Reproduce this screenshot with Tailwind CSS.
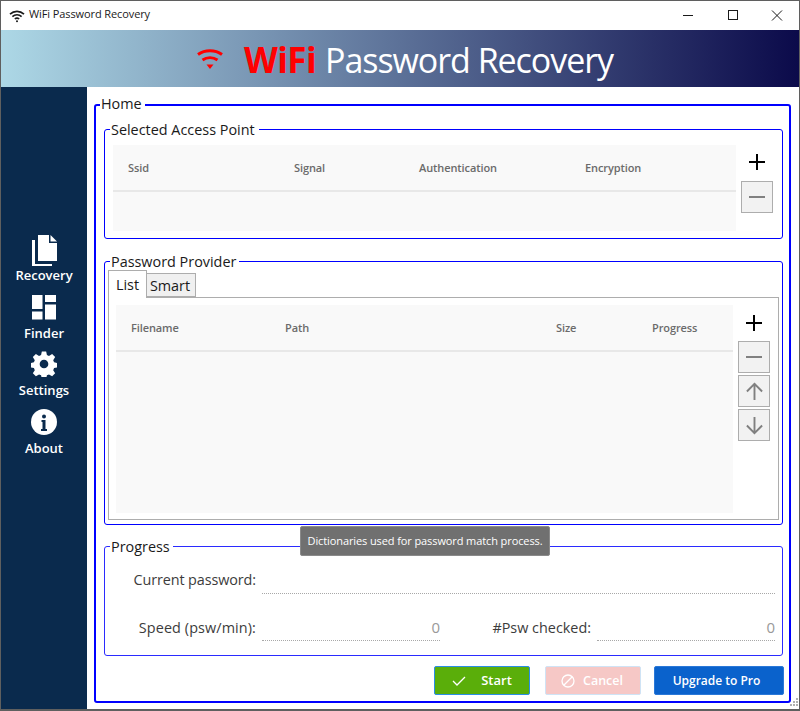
<!DOCTYPE html>
<html lang="en">
<head>
  <meta charset="UTF-8">
  <title>WiFi Password Recovery</title>
  <script src="https://cdn.jsdelivr.net/npm/@tailwindcss/browser@4"></script>
</head>
<body class="bg-white">
  <div class="relative flex h-[711px] w-[800px] flex-col overflow-hidden border border-b-2 border-[#5f5f5f] font-['Open_Sans',sans-serif] text-[#1a1a1a]">

    <!-- title bar -->
    <header class="flex h-[29px] shrink-0 items-center justify-between pl-[8px]">
      <div class="flex items-center gap-[4px]">
        <svg width="16" height="14" viewBox="0 0 16 14" fill="none" stroke="#1a1a1a" stroke-width="1.6"><path d="M1 5.200C5 1.400 11 1.400 15 5.200"/><path d="M3.400 7.600C6 5.200 10 5.200 12.600 7.600"/><path d="M5.800 10C7 9 9 9 10.200 10"/><circle cx="8" cy="12.200" r="1" fill="#1a1a1a" stroke="none"/></svg>
        <span class="mt-[-2px] text-[11px] tracking-[-0.1px]">WiFi Password Recovery</span>
      </div>
      <div class="flex items-center">
        <svg width="46" height="29" viewBox="0 0 46 29" stroke="#1a1a1a" fill="none"><path d="M18 14.500h10"/></svg>
        <svg width="44" height="29" viewBox="0 0 44 29" stroke="#1a1a1a" fill="none"><rect x="17.500" y="9.500" width="9" height="9"/></svg>
        <svg width="44" height="29" viewBox="0 0 44 29" stroke="#1a1a1a" fill="none"><path d="M17 9.500l10 10M27 9.500l-10 10"/></svg>
      </div>
    </header>

    <!-- banner -->
    <div class="flex h-[57px] shrink-0 items-center bg-linear-to-r/srgb from-[#add8e6] to-[#0b0a4a] pl-[196px]">
      <svg width="26" height="24" viewBox="0 0 26 24" fill="none" stroke="#ff0000" stroke-width="3"><path d="M1 7.500C8 2.500 18 2.500 25 7.500"/><path d="M5.500 13C10 10 16 10 20.500 13"/><path d="M9.500 17.500h7L13 22z" fill="#ff0000" stroke="none"/></svg>
      <span class="ml-[21px] pt-[3px] text-[35px] font-bold tracking-[-0.6px] text-[#ff0000]">WiFi</span>
      <span class="ml-[9px] pt-[3px] text-[34px] tracking-[-1.050px] text-white">Password Recovery</span>
    </div>

    <div class="flex min-h-0 flex-1">
      <!-- sidebar -->
      <aside class="flex w-[86px] shrink-0 flex-col items-center bg-[#0a2a4d] pt-[148px] text-[13px] font-semibold text-white">
        <div class="flex h-[57.500px] flex-col items-center">
          <svg width="26" height="32" viewBox="0 0 26 32" fill="#fff" class="mt-[-1px]"><path d="M7 1h11v8h8v18H7z"/><path d="M19.500 1L26 7.500h-6.500z"/><path d="M1 6h3v24h17v2H1z"/></svg>
          <span class="leading-[18px]">Recovery</span>
        </div>
        <div class="flex h-[57.500px] flex-col items-center">
          <svg width="26" height="26" viewBox="0 0 26 26" fill="#fff" class="mb-[4px] mt-[1px]"><rect x="1" y="1" width="10.500" height="14"/><rect x="14" y="1" width="11" height="7"/><rect x="1" y="17.500" width="10.500" height="8"/><rect x="14" y="10.500" width="11" height="15"/></svg>
          <span class="leading-[18px]">Finder</span>
        </div>
        <div class="flex h-[57.500px] flex-col items-center">
          <svg width="26" height="26" viewBox="0 0 24 24" fill="#fff" class="mb-[4px] mt-[1px]"><path fill-rule="evenodd" d="M10 .5h4l.7 3.300 1.900.8 2.900-1.800 2.800 2.800-1.800 2.900.8 1.900 3.300.7v4l-3.300.7-.8 1.900 1.800 2.900-2.800 2.800-2.900-1.800-1.900.8-.7 3.300h-4l-.7-3.300-1.900-.8-2.900 1.800-2.800-2.800 1.800-2.900-.8-1.900-3.300-.7v-4l3.300-.7.8-1.900-1.800-2.900 2.800-2.800 2.900 1.800 1.900-.8zM12 8a4 4 0 1 0 0 8 4 4 0 0 0 0-8z"/></svg>
          <span class="leading-[18px]">Settings</span>
        </div>
        <div class="flex h-[57.500px] flex-col items-center">
          <svg width="26" height="26" viewBox="0 0 26 26" class="mb-[4px] mt-[1px]"><circle cx="13" cy="13" r="13" fill="#fff"/><circle cx="13" cy="7.500" r="2" fill="#0a2a4d"/><path d="M10.500 11h4v9h1.500v2h-6v-2h1.500v-7h-1z" fill="#0a2a4d"/></svg>
          <span class="leading-[18px]">About</span>
        </div>
      </aside>

      <!-- main -->
      <main class="flex min-w-0 flex-1 flex-col pl-[7px] pr-[8px] pt-[8px]">
        <fieldset class="flex h-[608px] flex-col rounded-[3px] border-2 border-[#0000ff] pl-[8px] pr-[6px]">
          <legend class="relative top-[-1px] ml-[-4px] pl-[1px] pr-[3px] text-[14.400px] leading-[20px]">Home</legend>

          <fieldset class="mt-[4px] h-[120px] rounded-[3px] border border-[#0000ff] px-[8px]">
            <legend class="relative top-[1px] ml-[-3px] pl-[1px] pr-[4px] text-[14.400px] leading-[20px]">Selected Access Point</legend>
            <div class="flex">
              <div class="mt-[6px] h-[86px] w-[623px] bg-[#f9f9f9]">
                <div class="flex h-[47px] items-center border-b-2 border-[#e8e8e8] pt-[2px] text-[11px] font-semibold tracking-[-0.1px] text-[#6b6b6b]">
                  <span class="w-[181px] pl-[15px]">Ssid</span>
                  <span class="w-[125px]">Signal</span>
                  <span class="w-[166px]">Authentication</span>
                  <span>Encryption</span>
                </div>
              </div>
              <div class="ml-[5px] flex w-[32px] flex-col">
                <div class="flex h-[42px] items-center justify-center pt-[4px]">
                  <svg width="18" height="18" viewBox="0 0 18 18" stroke="#000" stroke-width="2"><path d="M9 1v16M1 9h16"/></svg>
                </div>
                <div class="flex h-[32px] w-[32px] items-center justify-center border border-[#adadad] bg-[#f2f2f2]">
                  <svg width="18" height="18" viewBox="0 0 18 18" stroke="#808080" stroke-width="2"><path d="M1 9h16"/></svg>
                </div>
              </div>
            </div>
          </fieldset>

          <fieldset class="mt-[12px] h-[274px] rounded-[3px] border border-[#0000ff] px-[3px]">
            <legend class="relative top-[1px] ml-[2px] pl-[1px] pr-[3px] text-[14.400px] leading-[20px]">Password Provider</legend>
            <div class="relative z-10 flex h-[26px] items-end">
              <div class="mb-[-1px] flex h-[28px] w-[39px] items-center justify-center border border-b-0 border-[#adadad] bg-white text-[14.400px]">List</div>
              <div class="flex h-[24px] w-[49px] items-center justify-center border border-l-0 border-[#adadad] bg-[#f0f0f0] pr-[2px] pt-[1px] text-[14.400px]">Smart</div>
            </div>
            <div class="flex h-[223px] w-[671px] border border-[#adadad] pl-[7px] pt-[7px]">
              <div class="h-[208px] w-[617px] bg-[#f9f9f9]">
                <div class="flex h-[47px] items-center border-b-2 border-[#e8e8e8] pt-[2px] text-[11px] font-semibold tracking-[-0.1px] text-[#6b6b6b]">
                  <span class="w-[169px] pl-[15px]">Filename</span>
                  <span class="w-[271px]">Path</span>
                  <span class="w-[96px]">Size</span>
                  <span>Progress</span>
                </div>
              </div>
              <div class="ml-[5px] flex w-[32px] flex-col">
                <div class="flex h-[36px] items-center justify-center">
                  <svg width="18" height="18" viewBox="0 0 18 18" stroke="#000" stroke-width="2"><path d="M9 1v16M1 9h16"/></svg>
                </div>
                <div class="flex h-[32px] items-center justify-center border border-[#adadad] bg-[#f2f2f2]">
                  <svg width="18" height="18" viewBox="0 0 18 18" stroke="#808080" stroke-width="2"><path d="M1 9h16"/></svg>
                </div>
                <div class="mt-[2px] flex h-[32px] items-center justify-center border border-[#adadad] bg-[#f2f2f2]">
                  <svg width="19" height="19" viewBox="0 0 20 20" stroke="#808080" stroke-width="2" fill="none"><path d="M10 19V2M2 10l8-8 8 8"/></svg>
                </div>
                <div class="mt-[2px] flex h-[32px] items-center justify-center border border-[#adadad] bg-[#f2f2f2]">
                  <svg width="19" height="19" viewBox="0 0 20 20" stroke="#808080" stroke-width="2" fill="none"><path d="M10 1v17M2 10l8 8 8-8"/></svg>
                </div>
              </div>
            </div>
          </fieldset>

          <fieldset class="mt-[11px] h-[120px] rounded-[3px] border-[1.500px] border-[#2b2bff] text-[#3c3c3c]">
            <legend class="relative top-[1px] ml-[5px] pl-[1px] pr-[3px] text-[14.400px] leading-[20px] text-[#1a1a1a]">Progress</legend>
            <div class="flex h-[38px] items-end">
              <span class="w-[151px] pb-[3px] text-right text-[14.400px] leading-[22px] tracking-[-0.1px]">Current password:</span>
              <div class="ml-[6px] h-[26px] w-[513px] border-b border-dotted border-[#a8a8a8]"></div>
            </div>
            <div class="flex h-[47px] items-end">
              <span class="w-[151px] pb-[2px] text-right text-[14.400px] leading-[22px] tracking-[0.1px]">Speed (psw/min):</span>
              <div class="ml-[6px] flex h-[26px] w-[178px] items-center justify-end border-b border-dotted border-[#a8a8a8] text-[15px] text-[#999999]">0</div>
              <span class="w-[151px] pb-[2px] text-right text-[14.400px] leading-[22px]">#Psw checked:</span>
              <div class="ml-[6px] flex h-[26px] w-[178px] items-center justify-end border-b border-dotted border-[#a8a8a8] text-[15px] text-[#999999]">0</div>
            </div>
          </fieldset>

          <div class="mr-[-1px] mt-[10px] flex justify-end text-[13px] font-semibold text-white">
            <button class="flex h-[29px] w-[96px] items-center justify-center gap-[15px] rounded-[2px] border border-[#2a8ee6] bg-[#5aae0a]">
              <svg width="14" height="12" viewBox="0 0 14 12" fill="none" stroke="#fff" stroke-width="1.300"><path d="M1 6l4 4 8-8"/></svg>
              Start
            </button>
            <button class="ml-[15px] flex h-[29px] w-[96px] items-center justify-center gap-[8px] rounded-[2px] border border-[#cfe3f5] bg-[#f6c8c6] pr-[2px] pt-[1px] text-[12.500px]">
              <svg width="14" height="14" viewBox="0 0 14 14" fill="none" stroke="#fff" stroke-width="1.300"><circle cx="7" cy="7" r="6"/><path d="M3 11l8-8"/></svg>
              Cancel
            </button>
            <button class="ml-[13px] h-[29px] w-[130px] rounded-[2px] border border-[#2a78d8] bg-[#0a62cc] pr-[5px] text-[12px]">Upgrade to Pro</button>
          </div>
        </fieldset>
      </main>
    </div>

    <!-- tooltip over the panel border -->
    <div class="absolute left-[299px] top-[525px] flex h-[30px] w-[250px] items-center justify-center whitespace-nowrap rounded-[2px] border border-[#8a8a8a] bg-[#707070] text-[11px] tracking-[-0.1px] text-white">Dictionaries used for password match process.</div>

    <!-- resize grip -->
    <svg class="absolute bottom-0 right-0" width="12" height="12" viewBox="0 0 12 12" fill="#b0b0b0"><rect x="9" y="1" width="2" height="2"/><rect x="6" y="4" width="2" height="2"/><rect x="9" y="4" width="2" height="2"/><rect x="3" y="7" width="2" height="2"/><rect x="6" y="7" width="2" height="2"/><rect x="9" y="7" width="2" height="2"/></svg>
  </div>
</body>
</html>
